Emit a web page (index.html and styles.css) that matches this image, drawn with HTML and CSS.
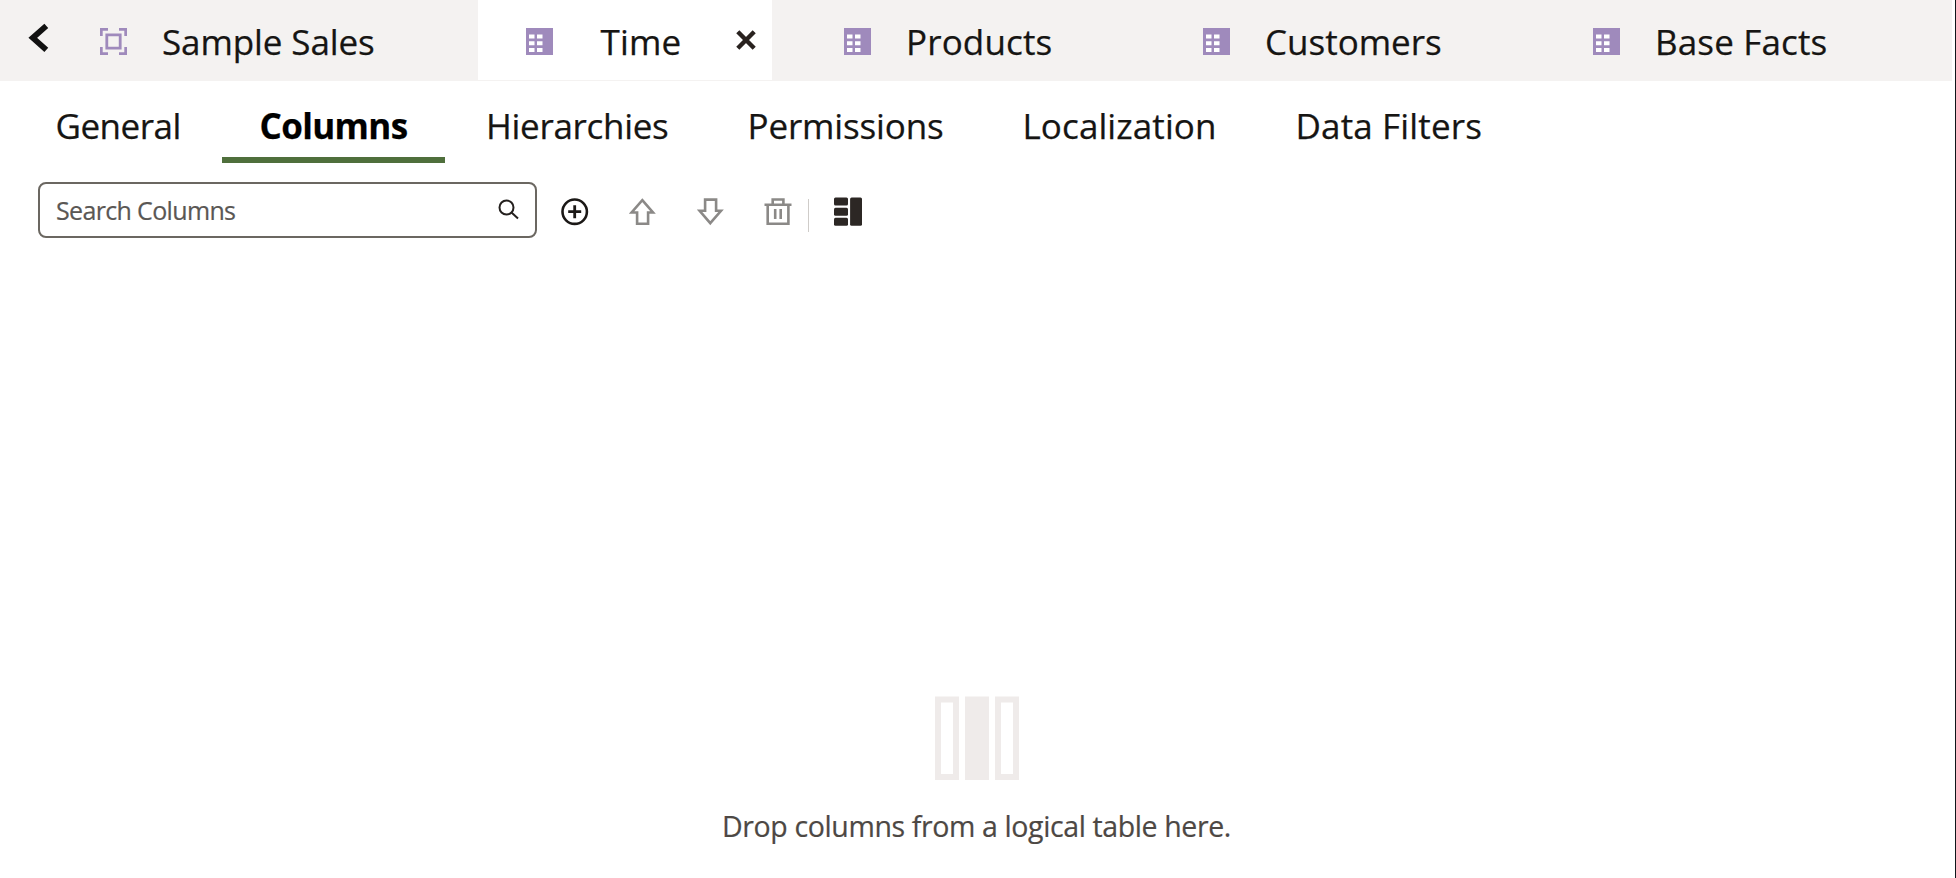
FILE: index.html
```html
<!DOCTYPE html>
<html lang="en">
<head>
<meta charset="utf-8">
<title>Time - Columns</title>
<link rel="stylesheet" href="styles.css">
</head>
<body>
<svg class="defs" width="0" height="0" aria-hidden="true">
  <symbol id="table" viewBox="0 0 27 27">
    <path fill="#9f8abc" d="M0 0h27v27H0z"/>
    <path fill="#fff" d="M3 6.500h5.500v4H3zM11 6.500h5.500v4H11zM3 13.200h5.500v4H3zM11 13.200h5.500v4H11zM3 20h5.500v4H3zM11 20h5.500v4H11z"/>
  </symbol>
</svg>
<div class="app">
  <header class="tabs">
    <button class="back" aria-label="Back"><svg width="21" height="30" viewBox="0 0 21 30"><path d="M18.300 2.800 4.800 14.800l13.500 12" fill="none" stroke="#111" stroke-width="5.800"/></svg></button>
    <div class="tab sales">
      <svg class="tab-icon" viewBox="0 0 27 27" fill="none" stroke="#9f8abc" stroke-width="2.800"><path d="M1.300 8V1.300H8M19 1.300h6.700V8M25.700 19v6.700H19M8 25.700H1.300V19M6.800 6.800h13.400v13.400H6.800z"/></svg>
      <span class="label">Sample Sales</span>
    </div>
    <div class="tab time active">
      <svg class="tab-icon"><use href="#table"/></svg>
      <span class="label">Time</span>
      <svg class="close" width="20" height="20" viewBox="0 0 20 20"><path d="m1.800 1.800 16.400 16.400m0-16.400L1.800 18.200" stroke="#29221f" stroke-width="4.400"/></svg>
    </div>
    <div class="tab products">
      <svg class="tab-icon"><use href="#table"/></svg>
      <span class="label">Products</span>
    </div>
    <div class="tab customers">
      <svg class="tab-icon"><use href="#table"/></svg>
      <span class="label">Customers</span>
    </div>
    <div class="tab facts">
      <svg class="tab-icon"><use href="#table"/></svg>
      <span class="label">Base Facts</span>
    </div>
  </header>
  <nav class="sections">
    <a class="section general">General</a>
    <a class="section columns">Columns</a>
    <a class="section hierarchies">Hierarchies</a>
    <a class="section permissions">Permissions</a>
    <a class="section localization">Localization</a>
    <a class="section filters">Data Filters</a>
  </nav>
  <div class="toolbar">
    <div class="search">
      <span class="hint">Search Columns</span>
      <svg width="21" height="21" viewBox="0 0 21 21" fill="none" stroke="#24201e" stroke-width="2"><circle cx="8.500" cy="8.500" r="7"/><path d="m13.500 13.500 6.500 6"/></svg>
    </div>
    <div class="tools">
      <svg width="28" height="28" viewBox="0 0 28 28" fill="none" stroke="#1b1816"><circle cx="13.700" cy="13.700" r="12.200" stroke-width="2.600"/><path d="M13.700 7.200v13M7.200 13.700h13" stroke-width="2.800"/></svg>
      <svg width="28" height="28" viewBox="0 0 28 28" fill="none" stroke="#8b8987" stroke-width="2.600"><path d="M13.300 2.200 24 14.500h-4.900v11.200H8.100V14.500H2.600z"/></svg>
      <svg width="28" height="28" viewBox="0 0 28 28" fill="none" stroke="#8b8987" stroke-width="2.600"><path d="M13.300 25.200 24 12.800h-4.900V1.600H8.100v11.200H2.600z"/></svg>
      <svg width="28" height="28" viewBox="0 0 28 28" fill="none" stroke="#8b8987" stroke-width="2.600"><path d="M.5 6.800h27M3.700 6.800v18.900h20.700V6.800M8.700 6.800V1.500h10.700v5.300M11.200 11v10M16.700 11v10"/></svg>
    </div>
    <span class="divider"></span>
    <svg class="layout" width="30" height="30" viewBox="0 0 30 30" fill="#2c2724"><rect x="1" y=".5" width="14" height="8" rx="1.500"/><rect x="1" y="10.700" width="14" height="8" rx="1.500"/><rect x="1" y="20.700" width="14" height="8" rx="1.500"/><rect x="17.100" y=".5" width="11.900" height="28.200" rx="1.500"/></svg>
  </div>
  <main class="empty">
    <svg width="84" height="84" viewBox="0 0 84 84"><path fill="none" stroke="#efebea" stroke-width="6" d="M3 3.500h18v77.500H3zM63 3.500h18v77.500H63z"/><path fill="#efebea" d="M30 .5h24V84H30z"/></svg>
    <p class="message">Drop columns from a logical table here.</p>
  </main>
</div>
</body>
</html>
```
FILE: styles.css
```css
* { box-sizing: border-box; }
body {
  margin: 0;
  background: #fff;
  color: #161513;
  font-family: "Open Sans", "Noto Sans", sans-serif;
}
svg { display: block; flex: none; }
.defs { position: absolute; }
.app {
  display: flex;
  flex-direction: column;
  width: 1956px;
  height: 878px;
  overflow: hidden;
  border-right: 1.500px solid #10151a;
}
.tabs {
  display: flex;
  flex: none;
  height: 81px;
  width: 1952px;
  background: #f4f2f1;
  font-size: 35px;
  line-height: 48px;
  white-space: nowrap;
}
.back {
  display: flex;
  align-items: flex-start;
  width: 62px;
  padding: 23px 0 0 28px;
  border: 0;
  background: none;
}
.tab { display: flex; align-items: flex-start; padding-top: 18px; flex: none; }
.tab-icon { width: 27px; height: 27px; margin-top: 10px; }
.sales { width: 416px; padding-left: 38px; }
.sales .label { margin-left: 35px; letter-spacing: -.1px; }
.time { width: 294px; padding-left: 47.500px; }
.time .label { margin-left: 48px; width: 135px; letter-spacing: .2px; }
.active { background: #fff; height: 80px; }
.close { margin-top: 12px; }
.products { width: 359px; padding-left: 72px; }
.customers { width: 390px; padding-left: 72px; }
.facts { padding-left: 72px; }
.products .label, .facts .label { margin-left: 35px; }
.products .label, .facts .label { letter-spacing: .15px; }
.customers .label { margin-left: 35px; }
.label, .section { -webkit-text-stroke: .25px currentColor; }
.sections {
  display: flex;
  flex: none;
  height: 82px;
  padding-left: 18px;
  font-size: 35px;
  line-height: 48px;
  white-space: nowrap;
}
.section { padding: 21px 0 0 37.500px; flex: none; }
.general { width: 204px; letter-spacing: -.5px; }
.columns {
  width: 223px;
  border-bottom: 6px solid #4f6f3c;
  color: #000;
  font-weight: 700;
  letter-spacing: -.65px;
}
.hierarchies { width: 263px; padding-left: 41px; letter-spacing: -.3px; }
.permissions { width: 275px; padding-left: 39.500px; letter-spacing: -.15px; }
.localization { width: 273px; padding-left: 39.500px; letter-spacing: .1px; }
.filters { padding-left: 39.500px; letter-spacing: .15px; }
.toolbar { display: flex; flex: none; height: 75px; padding: 19px 0 0 38px; }
.search {
  display: flex;
  align-items: flex-start;
  justify-content: space-between;
  width: 499px;
  height: 56px;
  padding: 9px 16px 0 16px;
  border: 2px solid #6b6761;
  border-radius: 8px;
  color: #5a5754;
  font-size: 25px;
  line-height: 34px;
  letter-spacing: -.65px;
}
.hint, .message { -webkit-text-stroke: .2px currentColor; }
.search svg { margin-top: 6px; }
.tools { display: flex; gap: 39.800px; margin: 16px 0 0 24px; }
.divider { width: 1px; height: 33px; margin: 17px 0 0 16px; background: #cfccc9; }
.layout { margin: 15px 0 0 24px; }
.empty {
  display: flex;
  flex: 1;
  flex-direction: column;
  align-items: center;
  padding: 458px 2px 0 0;
}
.message {
  margin: 26px 0 0;
  color: #4d4844;
  font-size: 28.500px;
  line-height: 40px;
  letter-spacing: -.38px;
  white-space: nowrap;
}
```
